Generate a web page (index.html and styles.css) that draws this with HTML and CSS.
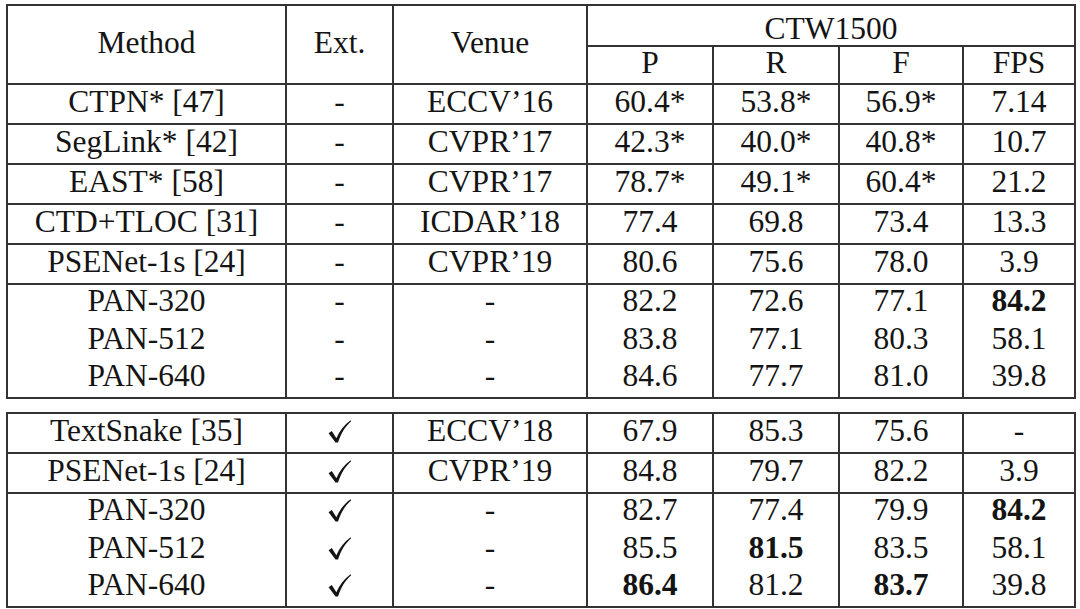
FILE: index.html
```html
<!DOCTYPE html>
<html lang="en">
  <head>
    <meta charset="UTF-8" />
    <meta name="viewport" content="width=device-width, initial-scale=1.0" />
    <title>CTW1500 results</title>
    <link rel="stylesheet" href="styles.css">
  </head>
  <body>
    <div class="sheet">
      <table class="results">
        <colgroup>
          <col class="c-method"><col class="c-ext"><col class="c-venue">
          <col class="c-p"><col class="c-r"><col class="c-f"><col class="c-fps">
        </colgroup>
        <thead>
          <tr class="head-top">
            <th rowspan="2">Method</th>
            <th rowspan="2">Ext.</th>
            <th rowspan="2">Venue</th>
            <th colspan="4">CTW1500</th>
          </tr>
          <tr class="head-sub">
            <th>P</th><th>R</th><th>F</th><th>FPS</th>
          </tr>
        </thead>
        <tbody>
          <tr><td>CTPN* [47]</td><td>-</td><td>ECCV’16</td><td>60.4*</td><td>53.8*</td><td>56.9*</td><td>7.14</td></tr>
          <tr><td>SegLink* [42]</td><td>-</td><td>CVPR’17</td><td>42.3*</td><td>40.0*</td><td>40.8*</td><td>10.7</td></tr>
          <tr><td>EAST* [58]</td><td>-</td><td>CVPR’17</td><td>78.7*</td><td>49.1*</td><td>60.4*</td><td>21.2</td></tr>
          <tr><td>CTD+TLOC [31]</td><td>-</td><td>ICDAR’18</td><td>77.4</td><td>69.8</td><td>73.4</td><td>13.3</td></tr>
          <tr><td>PSENet-1s [24]</td><td>-</td><td>CVPR’19</td><td>80.6</td><td>75.6</td><td>78.0</td><td>3.9</td></tr>
          <tr class="group first"><td>PAN-320</td><td>-</td><td>-</td><td>82.2</td><td>72.6</td><td>77.1</td><td><b>84.2</b></td></tr>
          <tr class="group"><td>PAN-512</td><td>-</td><td>-</td><td>83.8</td><td>77.1</td><td>80.3</td><td>58.1</td></tr>
          <tr class="group last"><td>PAN-640</td><td>-</td><td>-</td><td>84.6</td><td>77.7</td><td>81.0</td><td>39.8</td></tr>
        </tbody>
      </table>

      <table class="results lower">
        <colgroup>
          <col class="c-method"><col class="c-ext"><col class="c-venue">
          <col class="c-p"><col class="c-r"><col class="c-f"><col class="c-fps">
        </colgroup>
        <tbody>
          <tr><td>TextSnake [35]</td><td><svg class="check" viewBox="0 0 24 24"><path d="M1.5 13.6 L4.6 11.6 L9 18.4 C12 11.5 16.5 5.5 22.6 1.2 L23.2 2.1 C17.6 7.2 13.5 13.4 10.6 22.6 L8.2 22.6 Z"/></svg></td><td>ECCV’18</td><td>67.9</td><td>85.3</td><td>75.6</td><td>-</td></tr>
          <tr><td>PSENet-1s [24]</td><td><svg class="check" viewBox="0 0 24 24"><path d="M1.5 13.6 L4.6 11.6 L9 18.4 C12 11.5 16.5 5.5 22.6 1.2 L23.2 2.1 C17.6 7.2 13.5 13.4 10.6 22.6 L8.2 22.6 Z"/></svg></td><td>CVPR’19</td><td>84.8</td><td>79.7</td><td>82.2</td><td>3.9</td></tr>
          <tr class="group first"><td>PAN-320</td><td><svg class="check" viewBox="0 0 24 24"><path d="M1.5 13.6 L4.6 11.6 L9 18.4 C12 11.5 16.5 5.5 22.6 1.2 L23.2 2.1 C17.6 7.2 13.5 13.4 10.6 22.6 L8.2 22.6 Z"/></svg></td><td>-</td><td>82.7</td><td>77.4</td><td>79.9</td><td><b>84.2</b></td></tr>
          <tr class="group"><td>PAN-512</td><td><svg class="check" viewBox="0 0 24 24"><path d="M1.5 13.6 L4.6 11.6 L9 18.4 C12 11.5 16.5 5.5 22.6 1.2 L23.2 2.1 C17.6 7.2 13.5 13.4 10.6 22.6 L8.2 22.6 Z"/></svg></td><td>-</td><td>85.5</td><td><b>81.5</b></td><td>83.5</td><td>58.1</td></tr>
          <tr class="group last"><td>PAN-640</td><td><svg class="check" viewBox="0 0 24 24"><path d="M1.5 13.6 L4.6 11.6 L9 18.4 C12 11.5 16.5 5.5 22.6 1.2 L23.2 2.1 C17.6 7.2 13.5 13.4 10.6 22.6 L8.2 22.6 Z"/></svg></td><td>-</td><td><b>86.4</b></td><td>81.2</td><td><b>83.7</b></td><td>39.8</td></tr>
        </tbody>
      </table>
    </div>
  </body>
</html>
```

FILE: styles.css
```css
* {
  margin: 0;
  padding: 0;
  box-sizing: border-box;
}
body {
  background: #fff;
  color: #141414;
  font-family: "Liberation Serif", "Times New Roman", serif;
}
.sheet {
  padding: 4px 0 0 6px;
  display: flex;
  flex-direction: column;
  gap: 13px;
}
.results {
  width: 1068px;
  table-layout: fixed;
  border-collapse: collapse;
  font-size: 31.5px;
}
.c-method { width: 279px; }
.c-ext { width: 107px; }
.c-venue { width: 194px; }
.c-p { width: 126px; }
.c-r { width: 126px; }
.c-f { width: 124px; }
.c-fps { width: 112px; }

.results th,
.results td {
  border: 2px solid #333;
  text-align: center;
  font-weight: 400;
  line-height: 1;
  white-space: nowrap;
  padding: 0 0 4px;
}
.head-top th {
  height: 41px;
}
.head-top th[colspan] {
  padding: 6px 0 0;
}
.head-sub th {
  height: 37px;
}
.results td {
  height: 40px;
}
.results td b {
  font-weight: 700;
}
/* rows grouped without inner rules */
.results .group td {
  height: 38px;
  border-top: none;
  border-bottom: none;
}
.results .group.first td {
  border-top: 2px solid #333;
}
.results .group.last td {
  border-bottom: 2px solid #333;
}
.check {
  width: 25px;
  height: 25px;
  vertical-align: -3px;
  fill: #141414;
}
```
